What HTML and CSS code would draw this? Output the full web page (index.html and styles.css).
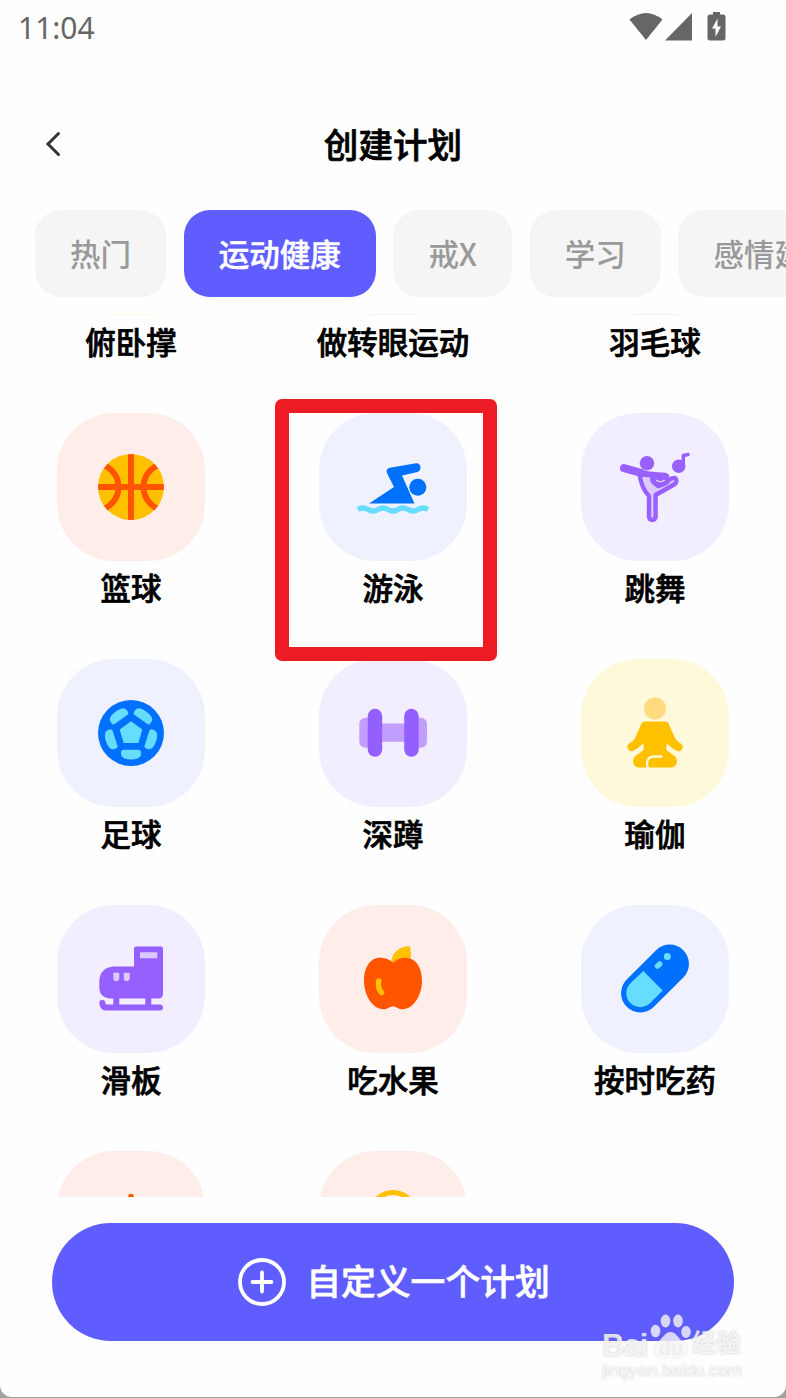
FILE: index.html
```html
<!DOCTYPE html>
<html lang="zh-CN">
<head>
    <meta charset="UTF-8">
    <meta name="viewport" content="width=device-width, initial-scale=1.0">
    <title>创建计划</title>
    <link rel="stylesheet" href="styles.css">
</head>
<body>
    <div class="screen">
        <div class="status-bar">
            <span class="time">11:04</span>
            <svg class="status-icons" width="98" height="30" viewBox="0 0 98 30">
                <path d="M0.5 7.5Q17 -5.5 33.5 7.5L17 28Z"/>
                <path d="M63 1V28.500H36Z"/>
                <path d="M84 0h7v2.500h3q2.500 0 2.500 2.500v21q0 2.500-2.500 2.500h-13q-2.500 0-2.500-2.500v-21q0-2.500 2.500-2.500h3z"/>
                <path class="bolt" d="M88.500 6.500l-5.500 10h3.500v8.500l5.500-10.500h-3.500z"/>
            </svg>
        </div>

        <header class="header">
            <svg class="back" width="18" height="26" viewBox="0 0 18 26"><path d="M14.500 2.500L4 13l10.500 10.500"/></svg>
            <h1>创建计划</h1>
        </header>

        <nav class="tabs">
            <span class="tab">热门</span>
            <span class="tab active">运动健康</span>
            <span class="tab">戒X</span>
            <span class="tab">学习</span>
            <span class="tab">感情建设</span>
        </nav>

        <main class="list">
            <div class="grid">
                <div class="item"><div class="tile yellow"></div><p>俯卧撑</p></div>
                <div class="item"><div class="tile blue"></div><p>做转眼运动</p></div>
                <div class="item"><div class="tile orange"></div><p>羽毛球</p></div>

                <div class="item">
                    <div class="tile orange">
                        <svg viewBox="0 0 148 148">
                            <clipPath id="ball"><circle cx="74" cy="74" r="33"/></clipPath>
                            <g clip-path="url(#ball)">
                                <path fill="#ffc000" d="M40 40h68v68H40z"/>
                                <g fill="none" stroke="#ff5500" stroke-width="6">
                                    <path d="M74 40v68M40 74h68"/>
                                    <circle cx="38" cy="74" r="23.500"/>
                                    <circle cx="110" cy="74" r="23.500"/>
                                </g>
                            </g>
                        </svg>
                    </div>
                    <p>篮球</p>
                </div>
                <div class="item selected">
                    <div class="tile blue">
                        <svg viewBox="0 0 148 148">
                            <path fill="#0070ff" d="M50 90.500L75 74L68.200 60.500Q66 56 71 54.800L97 50.300C102.500 50 103 57.500 98.500 59L83 62.500L95.500 90.500Z"/>
                            <circle cx="98.800" cy="74.200" r="8.500" fill="#0070ff"/>
                            <path fill="none" stroke="#66dcff" stroke-width="5.500" d="M39 96.500q5-3 10 0t10 0t10 0t10 0t10 0t10 0t10 0"/>
                        </svg>
                    </div>
                    <p>游泳</p>
                </div>
                <div class="item">
                    <div class="tile purple">
                        <svg viewBox="0 0 148 148">
                            <g stroke="#9861ff" stroke-width="4.400" stroke-linecap="round" stroke-linejoin="round">
                                <path fill="#dccaff" d="M58.500 61.500C60 71 62 77 68 83V104Q68.500 107 71.300 107T74.600 104V82L94 71Q97 67.500 94 65Q91.500 64.500 88 67Q82 72 77 73Q71 69 71 65L86 63Z"/>
                                <ellipse cx="79.500" cy="67" rx="7.500" ry="4.200" fill="#9861ff"/>
                                <path stroke-width="8" d="M43 55.200L60 59.800"/>
                                <path stroke-width="5.500" fill="none" d="M60 59.800Q70 62 84 62.500"/>
                                <path stroke="#dccaff" stroke-width="1.800" d="M76 67.500Q79 69.500 83 67.500"/>
                                <path stroke-width="3.500" fill="none" d="M102.300 53V42.500L107 41.500"/>
                            </g>
                            <circle cx="66" cy="50.200" r="7.200" fill="#9861ff"/>
                            <circle cx="97.700" cy="53.300" r="6.700" fill="#9861ff"/>
                        </svg>
                    </div>
                    <p>跳舞</p>
                </div>

                <div class="item">
                    <div class="tile blue">
                        <svg viewBox="0 0 148 148">
                            <circle cx="74" cy="74" r="33" fill="#0070ff"/>
                            <g fill="#66dcff">
                                <path d="M74 62.300L85.300 70.500L81.400 84H66.600L62.700 70.500Z"/>
                                <path id="patch" d="M66.500 90.800h15q2.500 0 2.500 2.500v1.500q0 3-3 4.400q-3 1.200-7 1.200t-7-1.200q-3-1.400-3-4.400v-1.500q0-2.500 2.500-2.500z"/>
                                <use href="#patch" transform="rotate(72 74 74)"/>
                                <use href="#patch" transform="rotate(144 74 74)"/>
                                <use href="#patch" transform="rotate(216 74 74)"/>
                                <use href="#patch" transform="rotate(288 74 74)"/>
                            </g>
                        </svg>
                    </div>
                    <p>足球</p>
                </div>
                <div class="item">
                    <div class="tile purple">
                        <svg viewBox="0 0 148 148">
                            <g fill="#c29fff">
                                <rect x="40.300" y="58.800" width="20" height="30" rx="6"/>
                                <rect x="88" y="58.800" width="20" height="30" rx="6"/>
                                <path d="M60 64.500h28v18.300H60z"/>
                            </g>
                            <g fill="#945fff">
                                <rect x="48.700" y="49.800" width="14.500" height="48" rx="7.200"/>
                                <rect x="85.200" y="49.800" width="14.500" height="48" rx="7.200"/>
                            </g>
                        </svg>
                    </div>
                    <p>深蹲</p>
                </div>
                <div class="item">
                    <div class="tile yellow">
                        <svg viewBox="0 0 148 148">
                            <circle cx="74" cy="49.500" r="11" fill="#ffdb80"/>
                            <path fill="#ffc000" d="M63.500 62.500H84.500Q86.500 62.500 87.500 64.500L94 79Q95 81.500 97.500 83L100.500 85Q102.500 87 101.200 90Q99.500 93 96 92L91 89L86 84.500Q84.500 89 86 91.500L93.500 97C98 101 96 108.500 90 108.500H58C52 108.500 50 101 54.500 97L62 91.500Q63.500 89 62 84.500L57 89L52 92Q48.500 93 46.800 90Q45.500 87 47.500 85L50.500 83Q53 81.500 54 79L60.500 64.500Q61.500 62.500 63.500 62.500Z"/>
                            <path fill="none" stroke="#fff9dc" stroke-width="2.300" stroke-linecap="round" d="M66.800 109.500C64.500 101.500 67.500 97.500 73 97.500H80.500"/>
                        </svg>
                    </div>
                    <p>瑜伽</p>
                </div>

                <div class="item">
                    <div class="tile purple">
                        <svg viewBox="0 0 148 148">
                            <path fill="#965fff" d="M79 41.500H104Q106 41.500 106 43.500V88.500Q106 93.500 101 93.500H52Q42.300 92 42.300 83V76Q43 62.500 57 61.500H77V43.500Q77 41.500 79 41.500Z"/>
                            <path fill="#965fff" d="M56.300 92h6v9h-6zM88.300 92h6v9h-6z"/>
                            <path fill="none" stroke="#965fff" stroke-width="6" stroke-linecap="round" d="M45.300 98Q45.500 102.500 50 102.500H103"/>
                            <path fill="#dccaff" d="M83 47.200h17.300v6H83zM56.300 67.800h6v5.500q-.3 3-3 3t-3-3zM66.700 67.800h6v5.500q-.3 3-3 3t-3-3z"/>
                        </svg>
                    </div>
                    <p>滑板</p>
                </div>
                <div class="item">
                    <div class="tile orange">
                        <svg viewBox="0 0 148 148">
                            <path fill="#ffc000" d="M72 59C72.500 47 80 41.500 91 41.300Q92.500 47 91.500 55Z"/>
                            <path fill="#ff5500" d="M74 57.800C79 53.500 83 52.800 86 52.800C97 52.800 103 62.500 103 76C103 89 95 104.300 83.500 104.300C79 104.300 78 101.500 74 101.500S69 104.300 64.500 104.300C53 104.300 45 89 45 76C45 62.500 51 52.800 61 52.800C65 52.800 69.500 53.500 74 57.800Z"/>
                            <path fill="none" stroke="#ffc000" stroke-width="5.500" stroke-linecap="round" d="M59.700 76Q58.500 83 62.500 87.500"/>
                        </svg>
                    </div>
                    <p>吃水果</p>
                </div>
                <div class="item">
                    <div class="tile blue">
                        <svg viewBox="0 0 148 148">
                            <path stroke="#0070ff" stroke-width="38.500" stroke-linecap="round" d="M88.700 58.800L59.300 88.200"/>
                            <path fill="#66dcff" d="M62.300 66L81.700 85.400L69.200 98.100A14 14 0 0 1 49.400 78.300Z"/>
                            <circle cx="86.300" cy="51.500" r="3.500" fill="#66dcff"/>
                            <path stroke="#66dcff" stroke-width="5.500" stroke-linecap="round" d="M76.500 61L78.700 59"/>
                        </svg>
                    </div>
                    <p>按时吃药</p>
                </div>

                <div class="item">
                    <div class="tile orange">
                        <svg viewBox="0 0 148 148"><path stroke="#ff5500" stroke-width="5.500" stroke-linecap="round" d="M74 45.500V60"/></svg>
                    </div>
                </div>
                <div class="item">
                    <div class="tile orange">
                        <svg viewBox="0 0 148 148"><circle cx="74" cy="64" r="22.500" fill="none" stroke="#ffc000" stroke-width="5"/></svg>
                    </div>
                </div>
            </div>
        </main>

        <button class="create-btn">
            <svg width="48" height="48" viewBox="0 0 48 48"><circle cx="24" cy="24" r="22"/><path d="M24 14.500v19M14.500 24h19"/></svg>
            <span>自定义一个计划</span>
        </button>

        <div class="watermark">
            <div class="brand">
                <span class="bai">Bai</span>
                <span class="paw">
                    <svg width="42" height="48" viewBox="0 0 42 48">
                        <ellipse cx="5.500" cy="18" rx="4.800" ry="6.300"/>
                        <ellipse cx="15.500" cy="8" rx="4.800" ry="6.500"/>
                        <ellipse cx="28" cy="8" rx="4.800" ry="6.500"/>
                        <ellipse cx="36" cy="19" rx="4.800" ry="6"/>
                        <path d="M20.500 19C26 19 28 25 32 28C43 36 35 45 28 45C22 44 19 44 13 45C4 45 0 36 9 28C13 25 15 19 20.500 19Z"/>
                    </svg>
                    <b>du</b>
                </span>
                <span class="cn">经验</span>
            </div>
            <div class="url">jingyan.baidu.com</div>
        </div>
    </div>
</body>
</html>
```
FILE: styles.css
```css
* {
    box-sizing: border-box;
}
body {
    margin: 0;
    background: #a0a0a0;
    color: #000;
    font-family: "Noto Sans CJK SC", sans-serif;
}
.screen {
    position: relative;
    width: 786px;
    height: 1397px;
    background: #fefefe;
    border-radius: 0 0 12px 12px;
    overflow: hidden;
}
.status-bar {
    display: flex;
    justify-content: space-between;
    height: 90px;
    padding: 12px 59px 0 18px;
}
.time {
    margin-top: 1px;
    font: 30px/30px "Noto Sans", sans-serif;
    color: #666;
}
.status-icons {
    fill: #666;
}
.status-icons .bolt {
    fill: #fff;
}
.header {
    display: grid;
    grid-template-columns: 60px 1fr 60px;
    align-items: center;
    height: 108px;
    padding: 0 44px;
}
.back {
    fill: none;
    stroke: #333;
    stroke-width: 3;
    stroke-linecap: round;
}
h1 {
    margin: -2px 0 0;
    text-align: center;
    font-size: 34.6px;
    font-weight: 500;
    -webkit-text-stroke: 0.7px #000;
}
.tabs {
    display: flex;
    gap: 17.7px;
    padding: 12px 0 17px 35px;
    overflow: hidden;
}
.tab {
    flex: none;
    height: 87px;
    padding: 0 35px;
    border-radius: 26px;
    background: #f5f5f5;
    color: #999;
    font-size: 30.5px;
    font-weight: 500;
    line-height: 87px;
}
.tab.active {
    background: #605dff;
    color: #fff;
    -webkit-text-stroke: 0.5px #fff;
}
.list {
    height: 883px;
    overflow: hidden;
}
.grid {
    display: grid;
    grid-template-columns: repeat(3, 262px);
    grid-auto-rows: 246px;
    margin-top: -147px;
}
.item {
    display: flex;
    flex-direction: column;
    align-items: center;
    position: relative;
}
.item p {
    margin: 3.5px 0 0;
    font-size: 30.5px;
    font-weight: 500;
    line-height: 44px;
    -webkit-text-stroke: 0.7px #000;
}
.tile {
    width: 148px;
    height: 148px;
    border-radius: 57px;
}
.tile svg {
    display: block;
}
.orange {
    background: #ffede9;
}
.blue {
    background: #eff1ff;
}
.purple {
    background: #f3eeff;
}
.yellow {
    background: #fff9dc;
}
/* red frame around the chosen plan */
.selected::after {
    content: "";
    box-sizing: border-box;
    position: absolute;
    z-index: 1;
    top: -14px;
    left: 13px;
    width: 222px;
    height: 262px;
    border: 14px solid #ed1c24;
    border-radius: 7px;
}
.create-btn {
    display: flex;
    align-items: center;
    justify-content: center;
    gap: 20px;
    width: 682px;
    height: 118px;
    margin: 26px auto 0;
    padding: 0 0 0 2px;
    border: 0;
    border-radius: 59px;
    background: #605dff;
    color: #fff;
    font: 500 34.800px/50px "Noto Sans CJK SC", sans-serif;
    -webkit-text-stroke: 0.6px #fff;
}
.create-btn span {
    margin-top: -4px;
}
.create-btn svg {
    fill: none;
    stroke: #fff;
    stroke-width: 3.8;
    stroke-linecap: round;
}
.watermark {
    position: absolute;
    left: 602px;
    top: 1313px;
    width: 150px;
    color: rgba(255, 255, 255, 0.8);
    font-family: "Liberation Sans", "Noto Sans CJK SC", sans-serif;
    text-shadow: 0 0 2px rgba(120, 120, 120, 0.45);
}
.brand {
    display: flex;
    align-items: flex-end;
    height: 48px;
    font-weight: bold;
}
.bai {
    width: 48px;
    font-size: 31px;
    letter-spacing: -1px;
    line-height: 30px;
}
.paw {
    display: grid;
    width: 42px;
}
.paw svg,
.paw b {
    grid-area: 1 / 1;
}
.paw svg {
    fill: rgba(255, 255, 255, 0.75);
    filter: drop-shadow(0 0 1px rgba(120, 120, 120, 0.3));
}
.paw b {
    align-self: end;
    color: rgba(150, 150, 190, 0.45);
    font-size: 20px;
    line-height: 26px;
    text-align: center;
    text-shadow: none;
}
.cn {
    font-size: 24.5px;
    line-height: 34px;
}
.url {
    font-size: 17.4px;
    line-height: 18px;
}
```
